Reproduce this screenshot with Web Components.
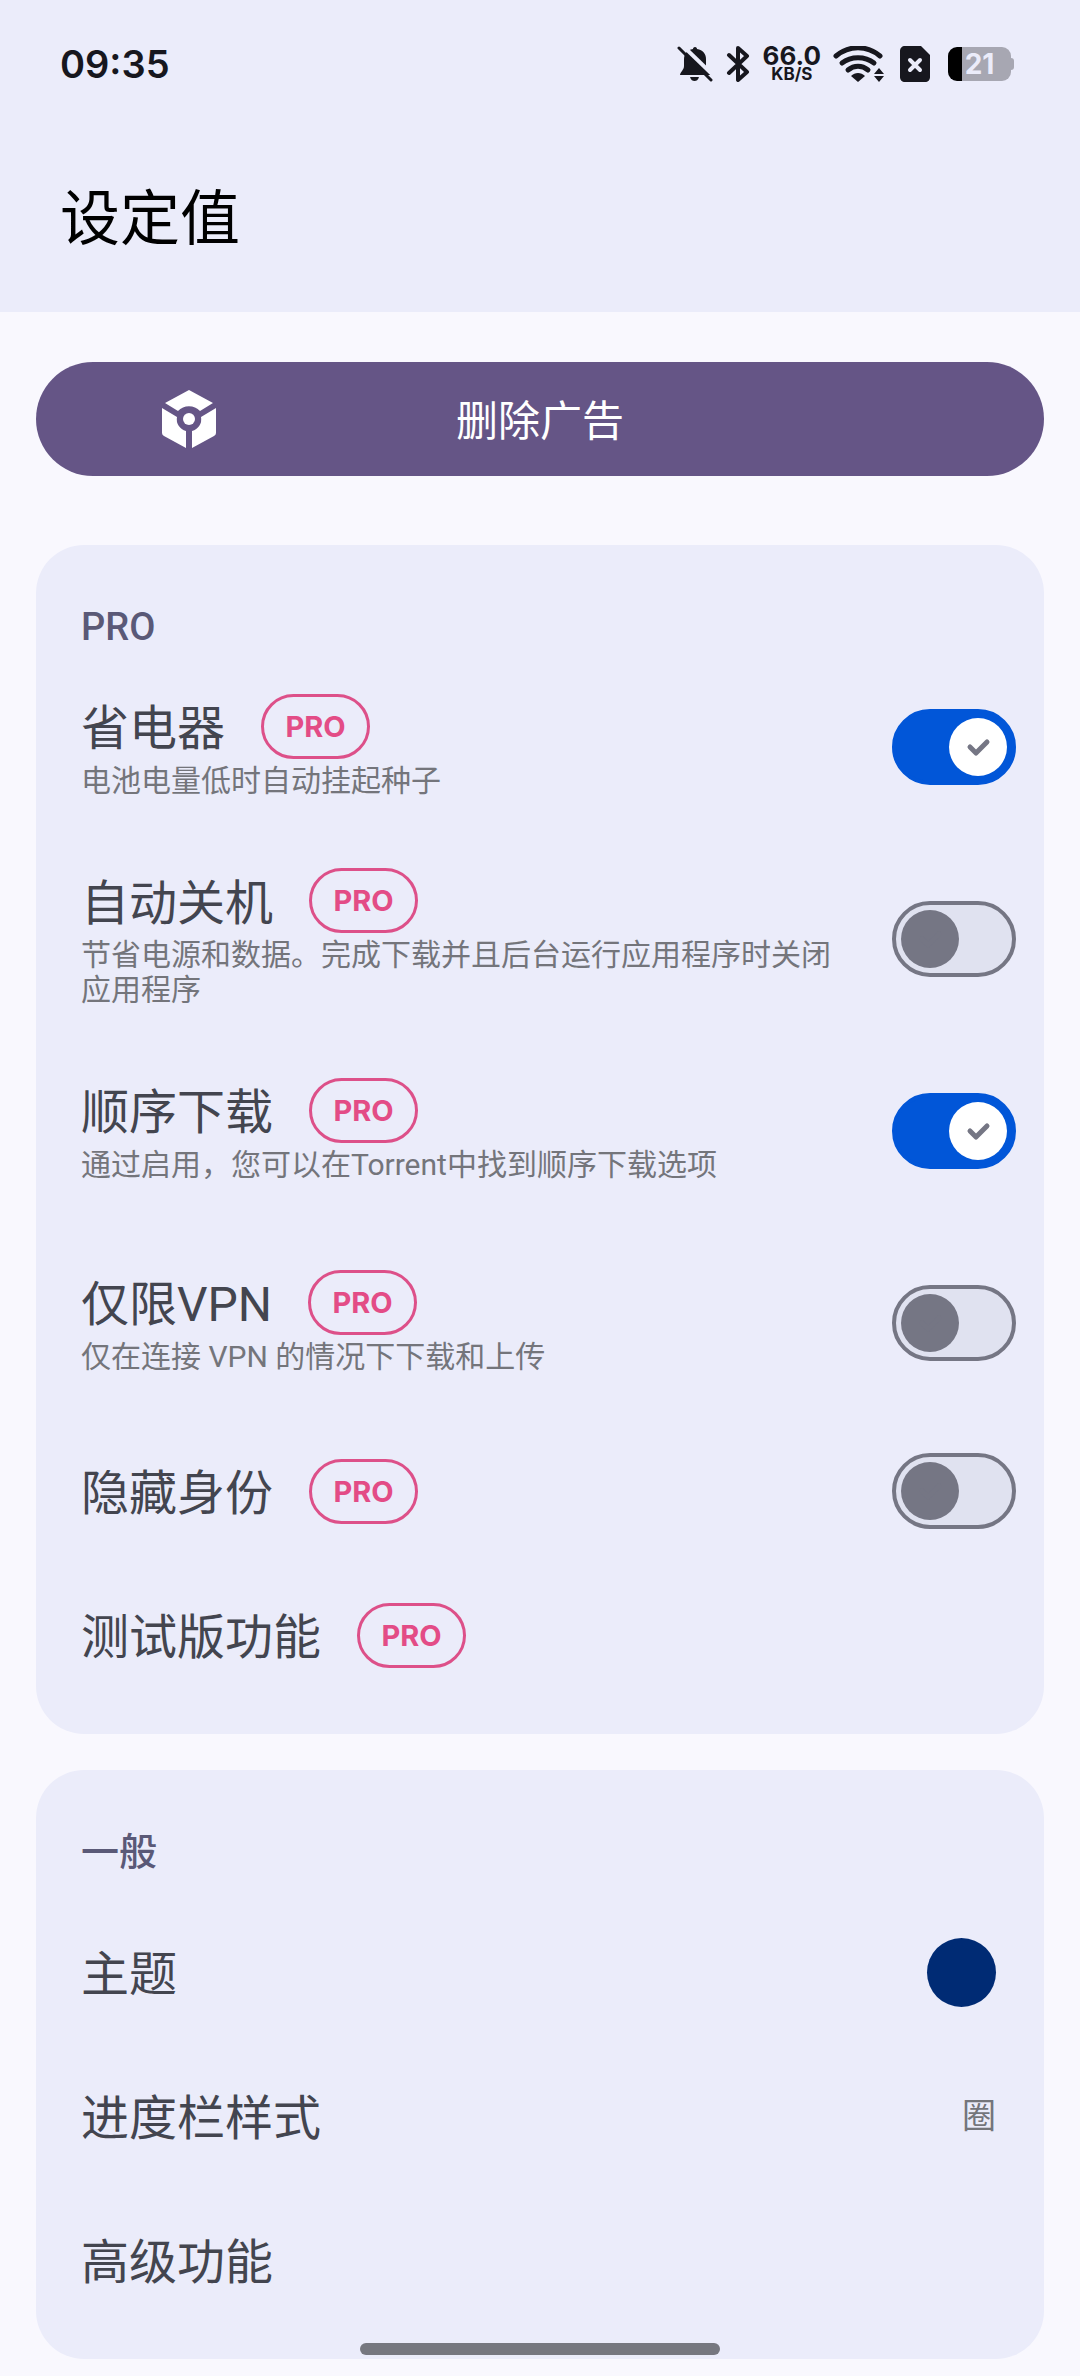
<!DOCTYPE html>
<html lang="zh-CN">
<head>
<meta charset="utf-8">
<meta name="viewport" content="width=device-width, initial-scale=1">
<title>设定值</title>
<style>
    html {
        background: #f9f8fe;
    }

    body {
        margin: 0;
        font-family: Roboto, "Noto Sans CJK SC", sans-serif;
        color: #43454f;
    }

    main {
        display: flex;
        flex-direction: column;
        gap: 36px;
        padding: 50px 36px 16px;
    }

    accent-button {
        margin-bottom: 33px;
    }

    .swatch {
        display: block;
        width: 69px;
        height: 69px;
        border-radius: 50%;
        background: #002b74;
    }
</style>
</head>
<body>

<app-header>设定值</app-header>

<main>
    <accent-button>删除广告</accent-button>

    <settings-card heading="PRO">
        <pref-row toggle checked pro>省电器<span slot="summary">电池电量低时自动挂起种子</span></pref-row>
        <pref-row toggle pro>自动关机<span slot="summary">节省电源和数据。完成下载并且后台运行应用程序时关闭应用程序</span></pref-row>
        <pref-row toggle checked pro>顺序下载<span slot="summary">通过启用，您可以在Torrent中找到顺序下载选项</span></pref-row>
        <pref-row toggle pro>仅限VPN<span slot="summary">仅在连接 VPN 的情况下下载和上传</span></pref-row>
        <pref-row toggle pro>隐藏身份</pref-row>
        <pref-row pro>测试版功能</pref-row>
    </settings-card>

    <settings-card heading="一般" spaced>
        <pref-row>主题<span slot="value" class="swatch"></span></pref-row>
        <pref-row>进度栏样式<span slot="value">圈</span></pref-row>
        <pref-row>高级功能</pref-row>
    </settings-card>
</main>

<nav-handle></nav-handle>

<script>
class BaseElement extends HTMLElement {
    constructor() {
        super();
        this.attachShadow({ mode: "open" });
    }

    connectedCallback() {
        const template = document.createElement("template");
        template.innerHTML = `<style>${this.css}</style>${this.html}`;
        this.shadowRoot.replaceChildren(template.content.cloneNode(true));
    }
}

class StatusBar extends BaseElement {
    css = `
        :host {
            display: flex;
            align-items: center;
            justify-content: space-between;
            height: 128px;
            padding: 0 66px 0 60px;
            color: #17171e;
            font-family: Inter, Roboto, sans-serif;
        }
        time {
            font-size: 38px;
            line-height: 48px;
            font-weight: 600;
        }
        .icons {
            display: flex;
            align-items: center;
            gap: 12px;
        }
        .speed {
            text-align: center;
            font-size: 26px;
            line-height: 21px;
            font-weight: 700;
        }
        .speed small {
            display: block;
            font-size: 17px;
            line-height: 17px;
        }
        svg {
            display: block;
            fill: currentColor;
        }
        .sim {
            margin-left: 3px;
        }
        .battery {
            display: flex;
            align-items: center;
            margin-left: 6px;
        }
        .level {
            width: 63px;
            height: 34px;
            border-radius: 9px;
            background: linear-gradient(90deg, #000 14px, #a7a7b2 14px);
            color: #ebecfa;
            font-size: 28px;
            line-height: 34px;
            font-weight: 700;
            text-align: center;
        }
        .tip {
            width: 3px;
            height: 12px;
            border-radius: 0 3px 3px 0;
            background: #a7a7b2;
        }
    `;

    html = `
        <time>09:35</time>
        <div class="icons">
            <svg width="36" height="36" viewBox="0 0 36 36">
                <path d="M18 1c1.500 0 2 1 2 2 6 1 9 5 9 10v7c0 3 4 5 5 9H3c0-3 4-5 4-9v-7c0-5 3-9 9-10 0-1 .5-2 2-2z"/>
                <path d="M13 31h9c-1 3-2.500 4-4.500 4s-3.500-1-4.500-4z"/>
                <path d="M4 -2L38 31" stroke="#ebecfa" stroke-width="4" fill="none"/>
                <path d="M2 2L34 34" stroke="currentColor" stroke-width="3" stroke-linecap="round" fill="none"/>
            </svg>
            <svg width="26" height="36" viewBox="0 0 26 36">
                <path d="M4 9l18 17-9 8V2l9 8L4 27" fill="none" stroke="currentColor" stroke-width="4" stroke-linecap="round" stroke-linejoin="round"/>
            </svg>
            <div class="speed">66.0<small>KB/S</small></div>
            <svg width="52" height="36" viewBox="0 0 52 36">
                <g fill="none" stroke="currentColor" stroke-width="5" stroke-linecap="round">
                    <path d="M3 10C16-1 34-1 47 10"/>
                    <path d="M9 17c9-7 23-7 32 0"/>
                    <path d="M15 24c6-5 14-5 20 0"/>
                </g>
                <path d="M18 30c4-4 10-4 14 0l-7 6z"/>
                <path d="M41 28l5-6 5 6zM41 30l5 6 5-6z"/>
            </svg>
            <svg class="sim" width="30" height="36" viewBox="0 0 30 36">
                <path d="M5 0h16l9 9v22c0 3-2 5-5 5H5c-3 0-5-2-5-5V5c0-3 2-5 5-5z"/>
                <path d="M10 14l10 10M20 14L10 24" stroke="#ebecfa" stroke-width="4" stroke-linecap="round"/>
            </svg>
            <div class="battery"><div class="level">21</div><div class="tip"></div></div>
        </div>
    `;
}

class AppHeader extends BaseElement {
    css = `
        :host {
            display: block;
            background: #ebecfa;
        }
        h1 {
            margin: 0;
            padding: 48px 60px;
            color: #000;
            font-size: 60px;
            line-height: 88px;
            font-weight: 400;
        }
    `;

    html = `<status-bar></status-bar><h1><slot></slot></h1>`;
}

class AccentButton extends BaseElement {
    css = `
        :host {
            display: block;
        }
        button {
            display: grid;
            grid-template-columns: 1fr auto 1fr;
            align-items: center;
            width: 100%;
            height: 114px;
            padding: 0 120px;
            border: none;
            border-radius: 57px;
            background: #655586;
            color: #fff;
            font-family: inherit;
            font-size: 42px;
            line-height: 60px;
        }
        span {
            padding-top: 6px;
        }
        svg {
            display: block;
            fill: #fff;
        }
    `;

    html = `
        <button type="button">
            <svg width="66" height="66" viewBox="0 0 66 66">
                <path d="M33 4l24 13-13 8a15 15 0 0 0-22 0L9 17z"/>
                <path d="M6 22l15 9a12 12 0 0 0 9 14v17L8 50q-2-1-2-3z"/>
                <path d="M60 22l-15 9a12 12 0 0 1-9 14v17l22-12q2-1 2-3z"/>
                <circle cx="33" cy="33" r="6"/>
            </svg>
            <span><slot></slot></span>
        </button>
    `;
}

class SettingsCard extends BaseElement {
    css = `
        :host {
            display: block;
            padding-bottom: 27px;
            border-radius: 48px;
            background: #ebecfa;
        }
        h2 {
            margin: 0;
            padding: 58px 45px 0;
            color: #5a5977;
            font-size: 38px;
            line-height: 48px;
            font-weight: 500;
        }
        :host([spaced]) h2 {
            padding-bottom: 24px;
        }
    `;

    get html() {
        return `<section><h2>${this.getAttribute("heading")}</h2><slot></slot></section>`;
    }
}

class ProBadge extends BaseElement {
    css = `
        :host {
            display: block;
            box-sizing: border-box;
            width: 109px;
            height: 65px;
            border: 3px solid #dd5089;
            border-radius: 33px;
            color: #e34c86;
            font-family: Inter, Roboto, sans-serif;
            font-size: 29px;
            line-height: 60px;
            font-weight: 700;
            text-align: center;
        }
    `;

    html = `PRO`;
}

class PrefRow extends BaseElement {
    css = `
        :host {
            display: block;
        }
        .row {
            display: flex;
            align-items: center;
            gap: 36px;
            box-sizing: border-box;
            width: 100%;
            min-height: 144px;
            padding: 0 28px 0 45px;
            border: none;
            background: none;
            color: inherit;
            font-family: inherit;
            text-align: left;
        }
        .row.tall {
            min-height: 192px;
        }
        .text {
            flex: 1;
        }
        .title {
            display: flex;
            align-items: center;
            gap: 36px;
            height: 65px;
            font-size: 48px;
            line-height: 58px;
        }
        .name {
            padding-top: 6px;
        }
        .summary {
            display: block;
            margin: 4px 0 3px;
            color: #74757b;
            font-size: 30px;
            line-height: 35px;
        }
        .value {
            margin-right: 20px;
            color: #74757b;
            font-size: 34px;
            line-height: 48px;
        }
        .switch {
            display: grid;
            align-items: center;
        }
        .switch > * {
            grid-area: 1 / 1;
        }
        input {
            appearance: none;
            box-sizing: border-box;
            width: 124px;
            height: 76px;
            margin: 0;
            border: 4px solid #757684;
            border-radius: 38px;
            background: #e0e2f0;
        }
        input:checked {
            border-color: #0156d8;
            background: #0156d8;
        }
        svg {
            width: 58px;
            height: 58px;
            margin-left: 9px;
            border-radius: 50%;
            background: #757684;
            pointer-events: none;
        }
        input:checked + svg {
            margin-left: 57px;
            background: #fff;
        }
        path {
            fill: none;
            stroke: #757684;
            stroke-width: 5;
            stroke-linecap: round;
            stroke-linejoin: round;
        }
    `;

    get html() {
        const summary = this.querySelector("[slot=summary]");
        const toggle = this.hasAttribute("toggle");

        const text = `
            <span class="text">
                <span class="title"><span class="name"><slot></slot></span>${this.hasAttribute("pro") ? "<pro-badge></pro-badge>" : ""}</span>
                ${summary ? `<span class="summary"><slot name="summary"></slot></span>` : ""}
            </span>`;

        if (toggle) {
            return `
                <label class="row ${summary ? "tall" : ""}" for="toggle">
                    ${text}
                    <span class="switch">
                        <input id="toggle" type="checkbox" role="switch" ${this.hasAttribute("checked") ? "checked" : ""}>
                        <svg viewBox="0 0 58 58"><path d="M21 29l6 6 11-11"/></svg>
                    </span>
                </label>`;
        }

        return `<button class="row" type="button">${text}<span class="value"><slot name="value"></slot></span></button>`;
    }
}

// gesture bar, floats above the scrolling list
class NavHandle extends BaseElement {
    css = `
        :host {
            position: fixed;
            right: 0;
            bottom: 21px;
            left: 0;
            display: flex;
            justify-content: center;
            pointer-events: none;
        }
        div {
            width: 360px;
            height: 12px;
            border-radius: 6px;
            background: #76777f;
        }
    `;

    html = `<div></div>`;
}

window.customElements.define("status-bar", StatusBar);
window.customElements.define("app-header", AppHeader);
window.customElements.define("accent-button", AccentButton);
window.customElements.define("settings-card", SettingsCard);
window.customElements.define("pro-badge", ProBadge);
window.customElements.define("pref-row", PrefRow);
window.customElements.define("nav-handle", NavHandle);
</script>
</body>
</html>
